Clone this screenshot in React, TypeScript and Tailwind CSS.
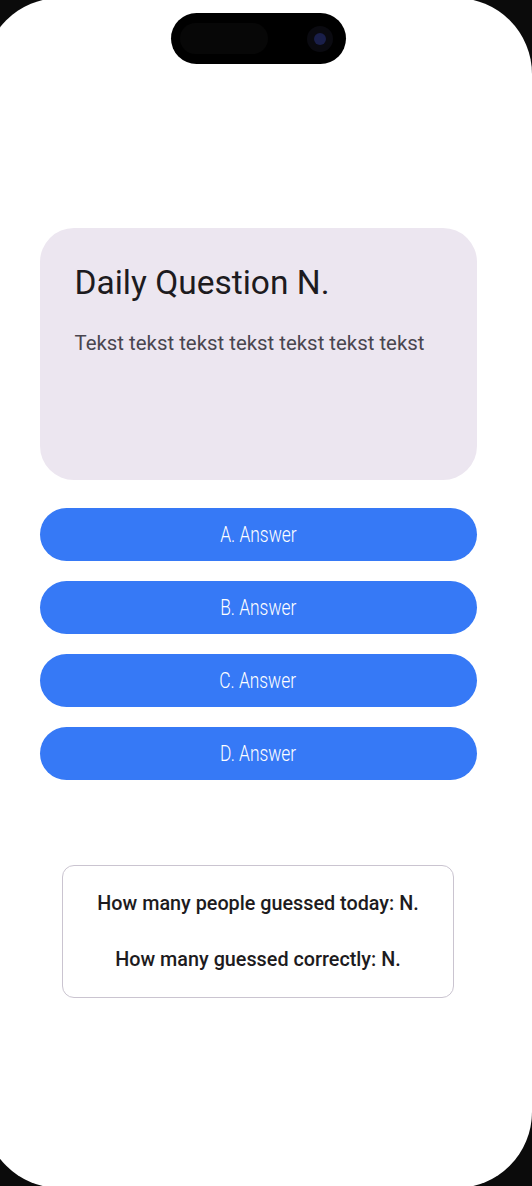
const answers = ["A. Answer", "B. Answer", "C. Answer", "D. Answer"];

export default function App() {
  return (
    <div className="h-[1186px] w-full overflow-hidden bg-[#0b0b0b]">
      {/* phone screen */}
      <div className="-ml-4 -mt-0.5 flex h-[1190px] w-[548px] flex-col items-center rounded-[76px] bg-white font-['Roboto',sans-serif]">
        {/* dynamic island */}
        <div className="mt-[15px] flex h-[51px] w-[175px] items-center justify-between rounded-full bg-black pl-[9px] pr-[13px]">
          <div className="h-[31px] w-[88px] rounded-full bg-[#070707]" />
          <div className="flex h-[26px] w-[26px] items-center justify-center rounded-full bg-[#0a0a10]">
            <div className="h-[12px] w-[12px] rounded-full bg-[#1a1f4a]" />
          </div>
        </div>

        {/* question card */}
        <div className="mt-[164px] h-[252px] w-[437px] rounded-[34px] bg-[#ECE6F0] px-[35px] pt-[34px]">
          <h1 className="text-[33.5px] leading-[42px] text-[#1D1B20]">Daily Question N.</h1>
          <p className="mt-[26px] text-[20.4px] leading-[26px] text-[#49454F]">
            Tekst tekst tekst tekst tekst tekst tekst
          </p>
        </div>

        {/* answers */}
        <div className="mt-[28px] flex flex-col gap-[20px]">
          {answers.map((a) => (
            <button
              key={a}
              className="flex h-[53px] w-[437px] items-center justify-center rounded-full bg-[#3679F6] text-white"
            >
              <span className="inline-block scale-x-[0.79] text-[22px] font-light">{a}</span>
            </button>
          ))}
        </div>

        {/* stats */}
        <div className="mt-[85px] flex h-[133px] w-[392px] flex-col items-center justify-center gap-[32px] rounded-[12px] border border-[#CAC4D0] text-[19.8px] font-medium leading-[24px] text-[#1D1B20]">
          <p>How many people guessed today: N.</p>
          <p>How many guessed correctly: N.</p>
        </div>
      </div>
    </div>
  );
}
